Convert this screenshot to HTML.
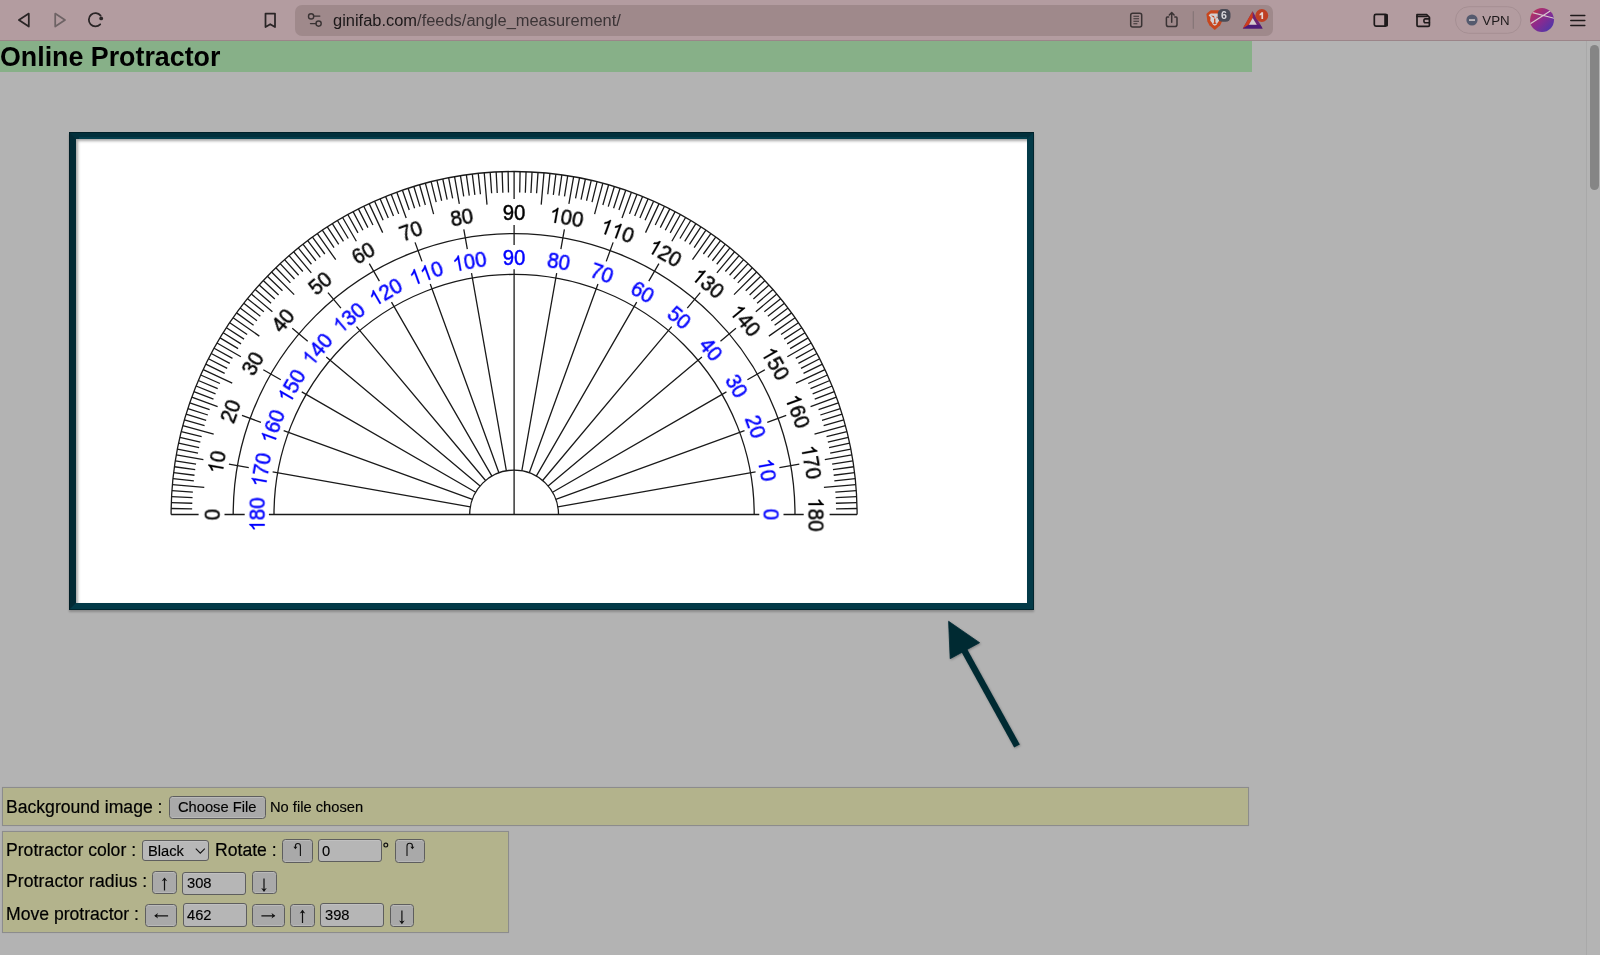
<!DOCTYPE html>
<html><head><meta charset="utf-8">
<style>
*{box-sizing:border-box}
html,body{margin:0;padding:0}
body{width:1600px;height:955px;overflow:hidden;background:#b3b3b3;position:relative;font-family:"Liberation Sans",sans-serif;color:#000}
.abs{position:absolute}
#toolbar{left:0;top:0;width:1600px;height:41px;background:#b39ca0;border-bottom:1px solid #9b8589}
#url{left:295px;top:5px;width:978px;height:30.6px;border-radius:7px;background:#9f898b}
#urltext{left:333px;top:11px;font-size:16.45px;line-height:19px;color:#3b3436;white-space:nowrap}
#title{left:0;top:41px;width:1252px;height:31px;background:#87b088}
#title h1{position:absolute;left:0;top:0;margin:0;font-size:26.8px;font-weight:bold;line-height:32px;white-space:nowrap}
#sb{left:1586px;top:41px;width:14px;height:914px;background:#b4b4b4;border-left:1px solid #a9a9a9}
#thumb{left:1590px;top:45px;width:9px;height:145px;border-radius:4.5px;background:#858585}
#box{left:69px;top:132px;width:965px;height:478px;border:7px solid #023441;border-color:#02303c #033a48 #033a48 #022a35;outline:1px solid rgba(0,20,26,.55);outline-offset:-1px;background:#fff;box-shadow:0 2px 2px rgba(0,0,0,.22)}
#box::after{content:"";position:absolute;left:0;top:0;right:0;bottom:0;box-shadow:inset 2px 2px 3px rgba(0,0,0,.35)}
svg.full{position:absolute;left:0;top:0}
svg text,.lbl,.sm,#urltext,#title h1{will-change:transform}
.panel{background:#b3b38c;border:1px solid #8c8c8c;box-shadow:0 0 0.6px #8c8c8c}
#p1{left:2px;top:787px;width:1247px;height:39px}
#p2{left:2px;top:831px;width:507px;height:102px}
.lbl{font-size:17.6px;line-height:20px;white-space:nowrap;-webkit-text-stroke:0.2px #000}
.sm{font-size:14.7px;line-height:17px;white-space:nowrap;-webkit-text-stroke:0.15px #000}
.btn{background:#a9a9a9;border:1.2px solid #5e5e5e;border-radius:3.5px;box-shadow:inset 0 1px 0 #bababa,inset 0 -1px 0 #b8b8b8}
.inp{background:#b6b6b6;border:1.2px solid #5e5e5e;border-radius:3px;box-shadow:inset 0 1px 0 #c0c0c0}
</style></head><body>
<div id="toolbar" class="abs"></div>
<div id="url" class="abs"></div>
<div id="urltext" class="abs"><span style="color:#1c1819">ginifab.com</span>/feeds/angle_measurement/</div>
<svg class="full" width="1600" height="41" viewBox="0 0 1600 41">
 <g fill="none" stroke="#2a2526" stroke-width="1.75" stroke-linejoin="round" stroke-linecap="round">
  <path d="M18.9 19.9L28.8 13.6V26.5Z"/>
  <path d="M55.2 13.6V26.5L65 19.9Z" stroke="#6e6365"/>
  <path d="M100.6 15.6A6.6 6.6 0 1 0 100.2 24.3"/>
  <path d="M265.5 13.5H275V27L270.25 24.2L265.5 27Z"/>
  <path d="M310.5 23.6H316M313.9 16.1H319.8" stroke="#3a3334" stroke-width="1.4"/>
  <circle cx="311.1" cy="16.4" r="2.6" stroke="#3a3334" stroke-width="1.4"/>
  <circle cx="318.6" cy="23.6" r="2.6" stroke="#3a3334" stroke-width="1.4"/>
  <rect x="1130.7" y="13.3" width="11" height="13.8" rx="2" stroke="#3a3334" stroke-width="1.5"/>
  <path d="M1133.4 16.3H1139M1133.4 18.8H1139M1133.4 21.3H1139M1133.4 23.8H1137.4" stroke="#3a3334" stroke-width="1.1" stroke-linecap="butt"/>
  <path d="M1168.6 17H1167.2Q1166.4 17 1166.4 18V24.4Q1166.4 26.6 1168.6 26.6H1174.8Q1177 26.6 1177 24.4V18Q1177 17 1176.2 17H1174.8" stroke="#3a3334" stroke-width="1.5"/>
  <path d="M1171.7 22.2V12.6M1169.3 15L1171.7 12.6L1174.1 15" stroke="#3a3334" stroke-width="1.5"/>
  <path d="M1193.3 11.7V28.3" stroke="#857577" stroke-width="1.2"/>
  <rect x="1374.3" y="14.4" width="12.8" height="11.8" rx="1.6" stroke="#1e1a1b" stroke-width="1.7"/>
  <path d="M1386 14.4V26.2" stroke="#1e1a1b" stroke-width="3.6" stroke-linecap="butt"/>
  <path d="M1417 14.5H1426.6L1429.4 17.3V25.2Q1429.4 26.4 1428.2 26.4H1418.2Q1417 26.4 1417 25.2Z" stroke="#1e1a1b" stroke-width="1.7"/>
  <path d="M1417 16.4H1427" stroke="#1e1a1b" stroke-width="1.7"/>
  <path d="M1429.4 18.9H1425.3Q1423.9 18.9 1423.9 20.8Q1423.9 22.8 1425.3 22.8H1429.4" stroke="#1e1a1b" stroke-width="1.6"/>
  <path d="M1570.8 15.6H1584.8M1570.8 20.5H1584.8M1570.8 25.4H1584.8" stroke="#1e1a1b" stroke-width="1.5"/>
 </g>
 <circle cx="101.2" cy="18.4" r="1.9" fill="#2a2526"/>
 <!-- brave -->
 <path d="M1210.8 10.2H1218.6L1222 13.2V21.5L1220.2 25.3L1214.8 30L1209.4 25.3L1207.4 21.5L1206.4 14L1207.9 12.5Z" fill="#c8461d"/>
 <path d="M1208.6 15.2L1210.8 13.4H1217.6L1219.4 14.8L1218.8 17.4L1219.2 20.8L1217.8 22.4L1216.6 24.8L1214.8 25.8L1213 24.8L1211.8 22.4L1210.3 20.8L1210.6 17.6Z" fill="#d2d0d3"/>
 <path d="M1211 15.4L1214 15.9L1214.6 18L1213.2 17.2ZM1214 18.6H1215.4V22.4L1216.8 23.2L1214.8 24.2L1212.8 23.2L1214.1 22.4ZM1216.6 16.6L1218 17.2L1216.6 18.4Z" fill="#c8461d"/>
 <rect x="1217.7" y="9" width="12.8" height="12.8" rx="4.8" fill="#4a4b56"/>
 <text x="1224" y="19.3" font-size="10.6" font-weight="bold" text-anchor="middle" fill="#d8d7da" font-family="Liberation Sans, sans-serif">6</text>
 <!-- BAT -->
 <path d="M1252.6 11.2L1262.6 28.4H1242.8Z" fill="#6c2372"/>
 <path d="M1252.6 11.2L1242.8 28.4L1248.9 24.8L1252.7 18Z" fill="#cc3d1c"/>
 <path d="M1242.8 28.4H1262.6L1260.3 24.8H1248.9Z" fill="#4b1b78"/>
 <path d="M1252.7 18L1248.9 24.8H1256.8Z" fill="#d3cbce"/>
 <circle cx="1261.8" cy="15.5" r="6.4" fill="#bf4024"/>
 <path d="M1261.4 12.2H1263.1V18.9H1261.4V14.7Q1260.5 15.3 1259.6 15.5V14Q1260.9 13.5 1261.4 12.2Z" fill="#e6dad7"/>
 <!-- VPN -->
 <rect x="1455.5" y="6.7" width="65.5" height="26.6" rx="13.3" fill="none" stroke="#a58f93" stroke-width="1"/>
 <circle cx="1472" cy="20" r="5.6" fill="#555a6e"/>
 <rect x="1469" y="19.2" width="6" height="1.7" fill="#c8c0c2"/>
 <text x="1482.3" y="24.6" font-size="13.3" fill="#1e1a1b" font-family="Liberation Sans, sans-serif">VPN</text>
 <defs><linearGradient id="av" x1="0" y1="0" x2="1" y2="1"><stop offset="0" stop-color="#c4344f"/><stop offset=".5" stop-color="#8a2a90"/><stop offset="1" stop-color="#3d3ab0"/></linearGradient>
 <clipPath id="avc"><circle cx="1542" cy="20" r="12"/></clipPath></defs>
 <circle cx="1542" cy="20" r="12" fill="url(#av)"/>
 <g clip-path="url(#avc)" stroke="#d8c8cc" stroke-width="1.1"><path d="M1530 24L1551 10.5M1532.5 12.6L1555 18.5"/></g>
</svg>
<div id="title" class="abs"><h1>Online Protractor</h1></div>
<div id="sb" class="abs"></div>
<div id="thumb" class="abs"></div>
<div id="box" class="abs"></div>
<div class="abs" style="left:79px;top:136.6px;width:948px;height:2.6px;background:#033e4c"></div>
<svg class="full" width="1600" height="955" viewBox="0 0 1600 955" style="pointer-events:none">
<path d="M171.10 514.50L198.60 514.50M224.50 514.50L244.70 514.50M268.90 514.50L469.70 514.50M171.15 508.51L192.15 508.88M171.31 502.53L192.30 503.26M171.57 496.55L192.54 497.65M171.94 490.57L192.88 492.04M172.41 484.61L204.28 487.39M172.98 478.65L193.86 480.84M173.66 472.70L194.50 475.26M174.44 466.76L195.23 469.69M175.32 460.84L196.06 464.13M176.31 454.94L203.39 459.71M228.90 464.21L248.79 467.72M272.63 471.92L470.37 506.79M177.40 449.05L198.02 453.06M178.60 443.19L199.14 447.55M179.89 437.34L200.35 442.07M181.29 431.52L201.66 436.60M182.79 425.73L213.70 434.01M184.39 419.96L204.57 425.74M186.09 414.22L206.17 420.36M187.89 408.51L207.86 415.00M189.79 402.83L209.64 409.67M191.79 397.19L217.63 406.59M241.97 415.45L260.95 422.36M283.69 430.64L472.38 499.31M193.88 391.58L213.49 399.11M196.08 386.01L215.55 393.88M198.37 380.48L217.70 388.68M200.75 374.99L219.94 383.53M203.24 369.54L232.24 383.07M205.81 364.14L224.69 373.34M208.48 358.78L227.20 368.32M211.25 353.47L229.79 363.33M214.11 348.21L232.47 358.39M217.05 343.00L240.87 356.75M263.30 369.70L280.79 379.80M301.75 391.90L475.65 492.30M220.09 337.84L238.09 348.66M223.22 332.74L241.03 343.87M226.44 327.69L244.05 339.13M229.74 322.70L247.15 334.44M233.13 317.76L259.34 336.12M236.61 312.89L253.60 325.23M240.17 308.08L256.94 320.72M243.81 303.33L260.36 316.26M247.54 298.64L263.86 311.86M251.35 294.02L272.41 311.70M292.25 328.35L307.73 341.33M326.27 356.89L480.09 485.96M255.23 289.47L271.08 303.25M259.20 284.99L274.81 299.04M263.25 280.57L278.60 294.90M267.37 276.23L282.47 290.82M271.56 271.96L294.19 294.59M275.83 267.77L290.42 282.87M280.17 263.65L294.50 279.00M284.59 259.60L298.64 275.21M289.07 255.63L302.85 271.48M293.62 251.75L311.30 272.81M327.95 292.65L340.93 308.13M356.49 326.67L485.56 480.49M298.24 247.94L311.46 264.26M302.93 244.21L315.86 260.76M307.68 240.57L320.32 257.34M312.49 237.01L324.83 254.00M317.36 233.53L335.72 259.74M322.30 230.14L334.04 247.55M327.29 226.84L338.73 244.45M332.34 223.62L343.47 241.43M337.44 220.49L348.26 238.49M342.60 217.45L356.35 241.27M369.30 263.70L379.40 281.19M391.50 302.15L491.90 476.05M347.81 214.51L357.99 232.87M353.07 211.65L362.93 230.19M358.38 208.88L367.92 227.60M363.74 206.21L372.94 225.09M369.14 203.64L382.67 232.64M374.59 201.15L383.13 220.34M380.08 198.77L388.28 218.10M385.61 196.48L393.48 215.95M391.18 194.28L398.71 213.89M396.79 192.19L406.19 218.03M415.05 242.37L421.96 261.35M430.24 284.09L498.91 472.78M402.43 190.19L409.27 210.04M408.11 188.29L414.60 208.26M413.82 186.49L419.96 206.57M419.56 184.79L425.34 204.97M425.33 183.19L433.61 214.10M431.12 181.69L436.20 202.06M436.94 180.29L441.67 200.75M442.79 179.00L447.15 199.54M448.65 177.80L452.66 198.42M454.54 176.71L459.31 203.79M463.81 229.30L467.32 249.19M471.52 273.03L506.39 470.77M460.44 175.72L463.73 196.46M466.36 174.84L469.29 195.63M472.30 174.06L474.86 194.90M478.25 173.38L480.44 194.26M484.21 172.81L486.99 204.68M490.17 172.34L491.64 193.28M496.15 171.97L497.25 192.94M502.13 171.71L502.86 192.70M508.11 171.55L508.48 192.55M514.10 171.50L514.10 199.00M514.10 224.90L514.10 245.10M514.10 269.30L514.10 514.50M520.09 171.55L519.72 192.55M526.07 171.71L525.34 192.70M532.05 171.97L530.95 192.94M538.03 172.34L536.56 193.28M543.99 172.81L541.21 204.68M549.95 173.38L547.76 194.26M555.90 174.06L553.34 194.90M561.84 174.84L558.91 195.63M567.76 175.72L564.47 196.46M573.66 176.71L568.89 203.79M564.39 229.30L560.88 249.19M556.68 273.03L521.81 470.77M579.55 177.80L575.54 198.42M585.41 179.00L581.05 199.54M591.26 180.29L586.53 200.75M597.08 181.69L592.00 202.06M602.87 183.19L594.59 214.10M608.64 184.79L602.86 204.97M614.38 186.49L608.24 206.57M620.09 188.29L613.60 208.26M625.77 190.19L618.93 210.04M631.41 192.19L622.01 218.03M613.15 242.37L606.24 261.35M597.96 284.09L529.29 472.78M637.02 194.28L629.49 213.89M642.59 196.48L634.72 215.95M648.12 198.77L639.92 218.10M653.61 201.15L645.07 220.34M659.06 203.64L645.53 232.64M664.46 206.21L655.26 225.09M669.82 208.88L660.28 227.60M675.13 211.65L665.27 230.19M680.39 214.51L670.21 232.87M685.60 217.45L671.85 241.27M658.90 263.70L648.80 281.19M636.70 302.15L536.30 476.05M690.76 220.49L679.94 238.49M695.86 223.62L684.73 241.43M700.91 226.84L689.47 244.45M705.90 230.14L694.16 247.55M710.84 233.53L692.48 259.74M715.71 237.01L703.37 254.00M720.52 240.57L707.88 257.34M725.27 244.21L712.34 260.76M729.96 247.94L716.74 264.26M734.58 251.75L716.90 272.81M700.25 292.65L687.27 308.13M671.71 326.67L542.64 480.49M739.13 255.63L725.35 271.48M743.61 259.60L729.56 275.21M748.03 263.65L733.70 279.00M752.37 267.77L737.78 282.87M756.64 271.96L734.01 294.59M760.83 276.23L745.73 290.82M764.95 280.57L749.60 294.90M769.00 284.99L753.39 299.04M772.97 289.47L757.12 303.25M776.85 294.02L755.79 311.70M735.95 328.35L720.47 341.33M701.93 356.89L548.11 485.96M780.66 298.64L764.34 311.86M784.39 303.33L767.84 316.26M788.03 308.08L771.26 320.72M791.59 312.89L774.60 325.23M795.07 317.76L768.86 336.12M798.46 322.70L781.05 334.44M801.76 327.69L784.15 339.13M804.98 332.74L787.17 343.87M808.11 337.84L790.11 348.66M811.15 343.00L787.33 356.75M764.90 369.70L747.41 379.80M726.45 391.90L552.55 492.30M814.09 348.21L795.73 358.39M816.95 353.47L798.41 363.33M819.72 358.78L801.00 368.32M822.39 364.14L803.51 373.34M824.96 369.54L795.96 383.07M827.45 374.99L808.26 383.53M829.83 380.48L810.50 388.68M832.12 386.01L812.65 393.88M834.32 391.58L814.71 399.11M836.41 397.19L810.57 406.59M786.23 415.45L767.25 422.36M744.51 430.64L555.82 499.31M838.41 402.83L818.56 409.67M840.31 408.51L820.34 415.00M842.11 414.22L822.03 420.36M843.81 419.96L823.63 425.74M845.41 425.73L814.50 434.01M846.91 431.52L826.54 436.60M848.31 437.34L827.85 442.07M849.60 443.19L829.06 447.55M850.80 449.05L830.18 453.06M851.89 454.94L824.81 459.71M799.30 464.21L779.41 467.72M755.57 471.92L557.83 506.79M852.88 460.84L832.14 464.13M853.76 466.76L832.97 469.69M854.54 472.70L833.70 475.26M855.22 478.65L834.34 480.84M855.79 484.61L823.92 487.39M856.26 490.57L835.32 492.04M856.63 496.55L835.66 497.65M856.89 502.53L835.90 503.26M857.05 508.51L836.05 508.88M857.10 514.50L829.60 514.50M803.70 514.50L783.50 514.50M759.30 514.50L558.50 514.50M469.70 514.50L558.50 514.50" stroke="#1a1a1a" stroke-width="1.3" fill="none"/>
<path d="M171.10 514.50A343.0 343.0 0 0 1 857.10 514.50M233.20 514.50A280.9 280.9 0 0 1 795.00 514.50M274.00 514.50A240.1 240.1 0 0 1 754.20 514.50M469.70 514.50A44.4 44.4 0 0 1 558.50 514.50" stroke="#1a1a1a" stroke-width="1.3" fill="none"/>
<g font-family="Liberation Sans, sans-serif" font-size="20.4" text-anchor="middle" stroke-width="0.45"><g transform="translate(211.80 514.50) rotate(-90) scale(1 1.09)" fill="#000" stroke="#000"><text x="0.00" y="7.3">0</text></g><g transform="translate(256.70 514.50) rotate(-90) scale(1 1.09)" fill="#00f" stroke="#00f"><path transform="translate(-17.02 7.3) scale(0.00996 -0.00996)" d="M755 0H590V1090Q525 1032 420 972Q315 912 230 884V1045Q381 1116 494 1214Q607 1312 654 1409H755Z" stroke-width="30"/><text x="0.00" y="7.3">8</text><text x="11.35" y="7.3">0</text></g><g transform="translate(216.39 462.01) rotate(-80) scale(1 1.09)" fill="#000" stroke="#000"><path transform="translate(-11.35 7.3) scale(0.00996 -0.00996)" d="M755 0H590V1090Q525 1032 420 972Q315 912 230 884V1045Q381 1116 494 1214Q607 1312 654 1409H755Z" stroke-width="30"/><text x="5.67" y="7.3">0</text></g><g transform="translate(260.61 469.80) rotate(-80) scale(1 1.09)" fill="#00f" stroke="#00f"><path transform="translate(-17.02 7.3) scale(0.00996 -0.00996)" d="M755 0H590V1090Q525 1032 420 972Q315 912 230 884V1045Q381 1116 494 1214Q607 1312 654 1409H755Z" stroke-width="30"/><text x="0.00" y="7.3">7</text><text x="11.35" y="7.3">0</text></g><g transform="translate(230.03 411.11) rotate(-70) scale(1 1.09)" fill="#000" stroke="#000"><text x="-5.67" y="7.3">2</text><text x="5.67" y="7.3">0</text></g><g transform="translate(272.22 426.46) rotate(-70) scale(1 1.09)" fill="#00f" stroke="#00f"><path transform="translate(-17.02 7.3) scale(0.00996 -0.00996)" d="M755 0H590V1090Q525 1032 420 972Q315 912 230 884V1045Q381 1116 494 1214Q607 1312 654 1409H755Z" stroke-width="30"/><text x="0.00" y="7.3">6</text><text x="11.35" y="7.3">0</text></g><g transform="translate(252.30 363.35) rotate(-60) scale(1 1.09)" fill="#000" stroke="#000"><text x="-5.67" y="7.3">3</text><text x="5.67" y="7.3">0</text></g><g transform="translate(291.19 385.80) rotate(-60) scale(1 1.09)" fill="#00f" stroke="#00f"><path transform="translate(-17.02 7.3) scale(0.00996 -0.00996)" d="M755 0H590V1090Q525 1032 420 972Q315 912 230 884V1045Q381 1116 494 1214Q607 1312 654 1409H755Z" stroke-width="30"/><text x="0.00" y="7.3">5</text><text x="11.35" y="7.3">0</text></g><g transform="translate(282.52 320.19) rotate(-50) scale(1 1.09)" fill="#000" stroke="#000"><text x="-5.67" y="7.3">4</text><text x="5.67" y="7.3">0</text></g><g transform="translate(316.92 349.05) rotate(-50) scale(1 1.09)" fill="#00f" stroke="#00f"><path transform="translate(-17.02 7.3) scale(0.00996 -0.00996)" d="M755 0H590V1090Q525 1032 420 972Q315 912 230 884V1045Q381 1116 494 1214Q607 1312 654 1409H755Z" stroke-width="30"/><text x="0.00" y="7.3">4</text><text x="11.35" y="7.3">0</text></g><g transform="translate(319.79 282.92) rotate(-40) scale(1 1.09)" fill="#000" stroke="#000"><text x="-5.67" y="7.3">5</text><text x="5.67" y="7.3">0</text></g><g transform="translate(348.65 317.32) rotate(-40) scale(1 1.09)" fill="#00f" stroke="#00f"><path transform="translate(-17.02 7.3) scale(0.00996 -0.00996)" d="M755 0H590V1090Q525 1032 420 972Q315 912 230 884V1045Q381 1116 494 1214Q607 1312 654 1409H755Z" stroke-width="30"/><text x="0.00" y="7.3">3</text><text x="11.35" y="7.3">0</text></g><g transform="translate(362.95 252.70) rotate(-30) scale(1 1.09)" fill="#000" stroke="#000"><text x="-5.67" y="7.3">6</text><text x="5.67" y="7.3">0</text></g><g transform="translate(385.40 291.59) rotate(-30) scale(1 1.09)" fill="#00f" stroke="#00f"><path transform="translate(-17.02 7.3) scale(0.00996 -0.00996)" d="M755 0H590V1090Q525 1032 420 972Q315 912 230 884V1045Q381 1116 494 1214Q607 1312 654 1409H755Z" stroke-width="30"/><text x="0.00" y="7.3">2</text><text x="11.35" y="7.3">0</text></g><g transform="translate(410.71 230.43) rotate(-20) scale(1 1.09)" fill="#000" stroke="#000"><text x="-5.67" y="7.3">7</text><text x="5.67" y="7.3">0</text></g><g transform="translate(426.06 272.62) rotate(-20) scale(1 1.09)" fill="#00f" stroke="#00f"><path transform="translate(-17.02 7.3) scale(0.00996 -0.00996)" d="M755 0H590V1090Q525 1032 420 972Q315 912 230 884V1045Q381 1116 494 1214Q607 1312 654 1409H755Z" stroke-width="30"/><path transform="translate(-5.67 7.3) scale(0.00996 -0.00996)" d="M755 0H590V1090Q525 1032 420 972Q315 912 230 884V1045Q381 1116 494 1214Q607 1312 654 1409H755Z" stroke-width="30"/><text x="11.35" y="7.3">0</text></g><g transform="translate(461.61 216.79) rotate(-10) scale(1 1.09)" fill="#000" stroke="#000"><text x="-5.67" y="7.3">8</text><text x="5.67" y="7.3">0</text></g><g transform="translate(469.40 261.01) rotate(-10) scale(1 1.09)" fill="#00f" stroke="#00f"><path transform="translate(-17.02 7.3) scale(0.00996 -0.00996)" d="M755 0H590V1090Q525 1032 420 972Q315 912 230 884V1045Q381 1116 494 1214Q607 1312 654 1409H755Z" stroke-width="30"/><text x="0.00" y="7.3">0</text><text x="11.35" y="7.3">0</text></g><g transform="translate(514.10 212.20) rotate(0) scale(1 1.09)" fill="#000" stroke="#000"><text x="-5.67" y="7.3">9</text><text x="5.67" y="7.3">0</text></g><g transform="translate(514.10 257.10) rotate(0) scale(1 1.09)" fill="#00f" stroke="#00f"><text x="-5.67" y="7.3">9</text><text x="5.67" y="7.3">0</text></g><g transform="translate(566.59 216.79) rotate(10) scale(1 1.09)" fill="#000" stroke="#000"><path transform="translate(-17.02 7.3) scale(0.00996 -0.00996)" d="M755 0H590V1090Q525 1032 420 972Q315 912 230 884V1045Q381 1116 494 1214Q607 1312 654 1409H755Z" stroke-width="30"/><text x="0.00" y="7.3">0</text><text x="11.35" y="7.3">0</text></g><g transform="translate(558.80 261.01) rotate(10) scale(1 1.09)" fill="#00f" stroke="#00f"><text x="-5.67" y="7.3">8</text><text x="5.67" y="7.3">0</text></g><g transform="translate(617.49 230.43) rotate(20) scale(1 1.09)" fill="#000" stroke="#000"><path transform="translate(-17.02 7.3) scale(0.00996 -0.00996)" d="M755 0H590V1090Q525 1032 420 972Q315 912 230 884V1045Q381 1116 494 1214Q607 1312 654 1409H755Z" stroke-width="30"/><path transform="translate(-5.67 7.3) scale(0.00996 -0.00996)" d="M755 0H590V1090Q525 1032 420 972Q315 912 230 884V1045Q381 1116 494 1214Q607 1312 654 1409H755Z" stroke-width="30"/><text x="11.35" y="7.3">0</text></g><g transform="translate(602.14 272.62) rotate(20) scale(1 1.09)" fill="#00f" stroke="#00f"><text x="-5.67" y="7.3">7</text><text x="5.67" y="7.3">0</text></g><g transform="translate(665.25 252.70) rotate(30) scale(1 1.09)" fill="#000" stroke="#000"><path transform="translate(-17.02 7.3) scale(0.00996 -0.00996)" d="M755 0H590V1090Q525 1032 420 972Q315 912 230 884V1045Q381 1116 494 1214Q607 1312 654 1409H755Z" stroke-width="30"/><text x="0.00" y="7.3">2</text><text x="11.35" y="7.3">0</text></g><g transform="translate(642.80 291.59) rotate(30) scale(1 1.09)" fill="#00f" stroke="#00f"><text x="-5.67" y="7.3">6</text><text x="5.67" y="7.3">0</text></g><g transform="translate(708.41 282.92) rotate(40) scale(1 1.09)" fill="#000" stroke="#000"><path transform="translate(-17.02 7.3) scale(0.00996 -0.00996)" d="M755 0H590V1090Q525 1032 420 972Q315 912 230 884V1045Q381 1116 494 1214Q607 1312 654 1409H755Z" stroke-width="30"/><text x="0.00" y="7.3">3</text><text x="11.35" y="7.3">0</text></g><g transform="translate(679.55 317.32) rotate(40) scale(1 1.09)" fill="#00f" stroke="#00f"><text x="-5.67" y="7.3">5</text><text x="5.67" y="7.3">0</text></g><g transform="translate(745.68 320.19) rotate(50) scale(1 1.09)" fill="#000" stroke="#000"><path transform="translate(-17.02 7.3) scale(0.00996 -0.00996)" d="M755 0H590V1090Q525 1032 420 972Q315 912 230 884V1045Q381 1116 494 1214Q607 1312 654 1409H755Z" stroke-width="30"/><text x="0.00" y="7.3">4</text><text x="11.35" y="7.3">0</text></g><g transform="translate(711.28 349.05) rotate(50) scale(1 1.09)" fill="#00f" stroke="#00f"><text x="-5.67" y="7.3">4</text><text x="5.67" y="7.3">0</text></g><g transform="translate(775.90 363.35) rotate(60) scale(1 1.09)" fill="#000" stroke="#000"><path transform="translate(-17.02 7.3) scale(0.00996 -0.00996)" d="M755 0H590V1090Q525 1032 420 972Q315 912 230 884V1045Q381 1116 494 1214Q607 1312 654 1409H755Z" stroke-width="30"/><text x="0.00" y="7.3">5</text><text x="11.35" y="7.3">0</text></g><g transform="translate(737.01 385.80) rotate(60) scale(1 1.09)" fill="#00f" stroke="#00f"><text x="-5.67" y="7.3">3</text><text x="5.67" y="7.3">0</text></g><g transform="translate(798.17 411.11) rotate(70) scale(1 1.09)" fill="#000" stroke="#000"><path transform="translate(-17.02 7.3) scale(0.00996 -0.00996)" d="M755 0H590V1090Q525 1032 420 972Q315 912 230 884V1045Q381 1116 494 1214Q607 1312 654 1409H755Z" stroke-width="30"/><text x="0.00" y="7.3">6</text><text x="11.35" y="7.3">0</text></g><g transform="translate(755.98 426.46) rotate(70) scale(1 1.09)" fill="#00f" stroke="#00f"><text x="-5.67" y="7.3">2</text><text x="5.67" y="7.3">0</text></g><g transform="translate(811.81 462.01) rotate(80) scale(1 1.09)" fill="#000" stroke="#000"><path transform="translate(-17.02 7.3) scale(0.00996 -0.00996)" d="M755 0H590V1090Q525 1032 420 972Q315 912 230 884V1045Q381 1116 494 1214Q607 1312 654 1409H755Z" stroke-width="30"/><text x="0.00" y="7.3">7</text><text x="11.35" y="7.3">0</text></g><g transform="translate(767.59 469.80) rotate(80) scale(1 1.09)" fill="#00f" stroke="#00f"><path transform="translate(-11.35 7.3) scale(0.00996 -0.00996)" d="M755 0H590V1090Q525 1032 420 972Q315 912 230 884V1045Q381 1116 494 1214Q607 1312 654 1409H755Z" stroke-width="30"/><text x="5.67" y="7.3">0</text></g><g transform="translate(816.40 514.50) rotate(90) scale(1 1.09)" fill="#000" stroke="#000"><path transform="translate(-17.02 7.3) scale(0.00996 -0.00996)" d="M755 0H590V1090Q525 1032 420 972Q315 912 230 884V1045Q381 1116 494 1214Q607 1312 654 1409H755Z" stroke-width="30"/><text x="0.00" y="7.3">8</text><text x="11.35" y="7.3">0</text></g><g transform="translate(771.50 514.50) rotate(90) scale(1 1.09)" fill="#00f" stroke="#00f"><text x="0.00" y="7.3">0</text></g></g>

<defs><filter id="ds" x="-20%" y="-20%" width="140%" height="140%"><feDropShadow dx="0.8" dy="1" stdDeviation="0.9" flood-color="#000" flood-opacity="0.28"/></filter></defs>
<g filter="url(#ds)"><path d="M964 650L1017 746" stroke="#022a33" stroke-width="6.5" fill="none"/>
<path d="M948.6 621.3L950.2 658.7L979.6 642.7Z" fill="#022a33" stroke="#022a33" stroke-width="0.8" stroke-linejoin="round"/></g>
</svg>
<div id="p1" class="abs panel"></div>
<div id="p2" class="abs panel"></div>
<div class="abs lbl" style="left:6px;top:797px">Background image :</div>
<div class="abs btn" style="left:169.3px;top:796.2px;width:96.3px;height:22.8px"></div>
<div class="abs sm" style="left:177.5px;top:799px">Choose File</div>
<div class="abs sm" style="left:270px;top:799px">No file chosen</div>

<div class="abs lbl" style="left:6px;top:840px">Protractor color :</div>
<div class="abs inp" style="left:142.2px;top:840.3px;width:67.3px;height:20.4px;border-radius:3px;background:#b8b8b8"></div>
<div class="abs sm" style="left:147.5px;top:843px">Black</div>
<div class="abs lbl" style="left:215px;top:840px">Rotate :</div>
<div class="abs btn" style="left:282.2px;top:839.3px;width:30.5px;height:24px"></div>
<div class="abs inp" style="left:318px;top:839.4px;width:63.6px;height:23px"></div>
<div class="abs sm" style="left:322px;top:842.5px">0</div>
<div class="abs btn" style="left:394.6px;top:839.2px;width:30.2px;height:24.1px"></div>

<div class="abs lbl" style="left:6px;top:871.3px;letter-spacing:0.08px">Protractor radius :</div>
<div class="abs btn" style="left:152.1px;top:871.2px;width:24.9px;height:23.3px"></div>
<div class="abs inp" style="left:182.2px;top:871.5px;width:63.8px;height:23px"></div>
<div class="abs sm" style="left:186.5px;top:874.5px">308</div>
<div class="abs btn" style="left:251.5px;top:871.2px;width:25px;height:23.3px"></div>

<div class="abs lbl" style="left:6px;top:904px">Move protractor :</div>
<div class="abs btn" style="left:145.4px;top:903.6px;width:31.2px;height:23px"></div>
<div class="abs inp" style="left:182.6px;top:903.4px;width:64.2px;height:23.2px"></div>
<div class="abs sm" style="left:186.5px;top:906.5px">462</div>
<div class="abs btn" style="left:252.3px;top:903.6px;width:32.4px;height:23px"></div>
<div class="abs btn" style="left:290.3px;top:903.6px;width:24.4px;height:23px"></div>
<div class="abs inp" style="left:320.3px;top:903.4px;width:63.8px;height:23.2px"></div>
<div class="abs sm" style="left:324.5px;top:906.5px">398</div>
<div class="abs btn" style="left:389.7px;top:903.6px;width:24.4px;height:23px"></div>
<svg class="full" width="1600" height="955" viewBox="0 0 1600 955" style="pointer-events:none">
 <g fill="none" stroke="#111" stroke-width="1.1">
  <path d="M195.8 848.6L200.3 853.1L204.8 848.6"/>
  <path d="M300.4 856.1V846A2.5 2.5 0 0 0 295.4 846V847.2"/>
  <path d="M407 856.1V846A2.7 2.7 0 0 1 412.4 846V847.2"/>
  <circle cx="385.8" cy="845.1" r="1.9" stroke-width="1.2"/>
  <path d="M164.5 878.5V890.6M264 878.5V890.6M302.5 910.5V923M401.9 910.5V923M155 915.8H168.1M261.4 915.8H274.5" stroke-width="1.2"/>
 </g>
 <g fill="#111">
  <path d="M293.4 846.8H297.4L295.4 849.2Z"/>
  <path d="M410.4 846.8H414.4L412.4 849.2Z"/>
  <path d="M164.5 877.4L167.3 881.2L164.5 880.1L161.7 881.2Z"/>
  <path d="M264 891.9L266.8 888.1L264 889.2L261.2 888.1Z"/>
  <path d="M302.5 909.8L305.3 913.6L302.5 912.5L299.7 913.6Z"/>
  <path d="M401.9 924.3L404.7 920.5L401.9 921.6L399.1 920.5Z"/>
  <path d="M154.2 915.8L158 913L156.9 915.8L158 918.6Z"/>
  <path d="M275.3 915.8L271.5 913L272.6 915.8L271.5 918.6Z"/>
 </g>
</svg>
</body></html>
